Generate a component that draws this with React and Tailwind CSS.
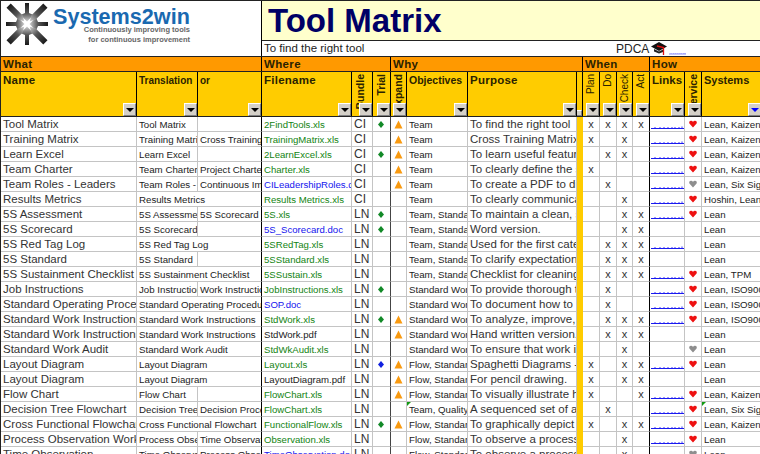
import React from "react";

const COLS = "grid grid-cols-[136px_61px_64px_90px_21px_18px_16px_61px_109px_6px_17px_17px_16px_17px_35px_17px_60px]";

const T = "Team", S = "Team, Standard", W = "Standard Work", F = "Flow, Standard";
const rows = [
  ["Tool Matrix", "Tool Matrix", "", "2FindTools.xls", "g", "CI", "g", 1, T, "To find the right tool", "xxxx", 1, "r", "Lean, Kaizen"],
  ["Training Matrix", "Training Matrix", "Cross Training Matrix", "TrainingMatrix.xls", "g", "CI", "", 1, T, "Cross Training Matrix", "x x ", 1, "r", "Lean, Kaizen"],
  ["Learn Excel", "Learn Excel", "", "2LearnExcel.xls", "g", "CI", "g", 1, T, "To learn useful features", " xx ", 1, "r", "Lean, Kaizen"],
  ["Team Charter", "Team Charter", "Project Charter", "Charter.xls", "g", "CI", "", 1, T, "To clearly define the scope", "x   ", 1, "r", "Lean, Kaizen"],
  ["Team Roles - Leaders", "Team Roles - Leaders", "Continuous Improvement", "CILeadershipRoles.doc", "b", "CI", "", 1, T, "To create a PDF to display", " x  ", 1, "s", "Lean, Six Sigma"],
  ["Results Metrics", "Results Metrics", null, "Results Metrics.xls", "g", "CI", "", 0, T, "To clearly communicate", "  x ", 1, "r", "Hoshin, Lean"],
  ["5S Assessment", "5S Assessment", "5S Scorecard", "5S.xls", "g", "LN", "g", 0, S, "To maintain a clean, safe", "  xx", 1, "r", "Lean"],
  ["5S Scorecard", "5S Scorecard", "", "5S_Scorecard.doc", "b", "LN", "g", 0, S, "Word version.", "  xx", 0, "", "Lean"],
  ["5S Red Tag Log", "5S Red Tag Log", null, "5SRedTag.xls", "g", "LN", "", 0, S, "Used for the first category", " xxx", 1, "", "Lean"],
  ["5S Standard", "5S Standard", "", "5SStandard.xls", "g", "LN", "", 0, S, "To clarify expectations", " xxx", 0, "", "Lean"],
  ["5S Sustainment Checklist", "5S Sustainment Checklist", null, "5SSustain.xls", "g", "LN", "", 0, S, "Checklist for cleaning", " xxx", 1, "r", "Lean, TPM"],
  ["Job Instructions", "Job Instructions", "Work Instructions", "JobInstructions.xls", "g", "LN", "g", 0, W, "To provide thorough training", " x  ", 1, "r", "Lean, ISO9000"],
  ["Standard Operating Procedures", "Standard Operating Procedures", null, "SOP.doc", "b", "LN", "", 0, W, "To document how to", " x  ", 1, "r", "Lean, ISO9000"],
  ["Standard Work Instructions", "Standard Work Instructions", null, "StdWork.xls", "g", "LN", "g", 1, W, "To analyze, improve,", " xxx", 1, "r", "Lean, ISO9000"],
  ["Standard Work Instructions", "Standard Work Instructions", null, "StdWork.pdf", "k", "LN", "", 1, W, "Hand written version.", " xxx", 0, "", "Lean"],
  ["Standard Work Audit", "Standard Work Audit", null, "StdWkAudit.xls", "g", "LN", "", 0, W, "To ensure that work is", "  x ", 0, "s", "Lean"],
  ["Layout Diagram", "Layout Diagram", null, "Layout.xls", "g", "LN", "b", 1, F, "Spaghetti Diagrams - to", "x xx", 1, "r", "Lean"],
  ["Layout Diagram", "Layout Diagram", null, "LayoutDiagram.pdf", "k", "LN", "", 1, F, "For pencil drawing.", "x xx", 0, "", "Lean"],
  ["Flow Chart", "Flow Chart", "", "FlowChart.xls", "g", "LN", "", 1, F, "To visually illustrate how", "x  x", 1, "r", "Lean, Kaizen"],
  ["Decision Tree Flowchart", "Decision Tree", "Decision Process", "FlowChart.xls", "g", "LN", "", 0, "Team, Quality", "A sequenced set of actions", " x  ", 1, "r", "Lean, Six Sigma", 1],
  ["Cross Functional Flowchart", "Cross Functional Flowchart", null, "FunctionalFlow.xls", "g", "LN", "g", 1, F, "To graphically depict", "x xx", 1, "r", "Lean, Kaizen"],
  ["Process Observation Worksheet", "Process Observation", "Time Observation", "Observation.xls", "g", "LN", "", 0, F, "To observe a process", "  x ", 1, "r", "Lean"],
  ["Time Observation", "Time Observation", "Process Observation", "TimeObservation.doc", "b", "LN", "", 0, F, "To observe a process", "  x ", 0, "s", "Lean"],
];

const Filter = ({ blue, small }) => (
  <div className={`absolute right-0 bottom-0 flex items-center justify-center border border-t-white border-l-white border-r-[#808080] border-b-[#808080] bg-[#d4d0c8] ${small ? "w-[6px] h-[6px]" : "w-[13px] h-[13px]"}`}>
    {!small && <div className={`w-0 h-0 border-x-[4px] border-x-transparent border-t-[4px] ${blue ? "border-t-[#0000ff]" : "border-t-black"}`} />}
  </div>
);

const Logo = () => (
  <svg width="46" height="44" viewBox="-23 -22 46 44" className="shrink-0">
    <defs>
      <linearGradient id="lg" x1="0" y1="0" x2="0" y2="1">
        <stop offset="0" stopColor="#1a1a1a" />
        <stop offset="0.55" stopColor="#555" />
        <stop offset="1" stopColor="#d0d0d0" />
      </linearGradient>
    </defs>
    {[0, 90, 180, 270].map((a) => (
      <polygon key={a} transform={`rotate(${a})`} points="-2,-21 2,-21 2,-11 6.5,-9 0,-2.5 -6.5,-9 -2,-11" fill="url(#lg)" />
    ))}
    {[45, 135, 225, 315].map((a) => (
      <polygon key={a} transform={`rotate(${a})`} points="-3,-26 3,-26 3,-9 0,-4 -3,-9" fill="url(#lg)" />
    ))}
  </svg>
);

const Hat = () => (
  <svg width="17" height="14" viewBox="0 0 17 14" className="shrink-0">
    <polygon points="0,4.5 8,0 16,4.5 8,9" fill="#111" />
    <polygon points="3,7 8,9.5 12,7.5 12,10 8,11.5 3,9.5" fill="#222" />
    <path d="M6 4 L12.5 5.5 V13" stroke="#e01010" strokeWidth="1.3" fill="none" />
  </svg>
);

const Link = ({ w = "w-[33px]" }) => (
  <svg viewBox="0 0 33 3" className={`block ${w} h-[3px]`}>
    <path d="M0 2.5 H33" stroke="#1a1af0" strokeWidth="1" />
    <path d="M4 1 V2 M9 1 V2 M13 1 V2 M17 1 V2 M21 1 V2 M24 1 V2 M28 1 V2 M31 0.5 V2" stroke="#3a3af5" strokeWidth="1" />
  </svg>
);

const Heart = ({ c }) => (
  <svg width="8" height="8" viewBox="0 0 8 7">
    <path d="M4 7 L0.4 3 Q-0.4 .6 1.8 .2 Q3.4 0 4 1.6 Q4.6 0 6.2 .2 Q8.4 .6 7.6 3 Z" fill={c === "r" ? "#ee1111" : "#8e8e8e"} />
  </svg>
);

const Tri = () => (
  <svg width="9" height="9" viewBox="0 0 9 9"><polygon points="4.5,0.5 8.5,8.5 0.5,8.5" fill="#f99a10" /></svg>
);

const Mark = ({ c }) => (
  <svg width="6" height="7" viewBox="0 0 6 7"><path d="M3 0 L6 3.5 L3 7 L0 3.5 Z" fill={c === "g" ? "#128a28" : "#1020e0"} /></svg>
);

const Corner = () => <div className="absolute left-0 top-0 w-0 h-0 border-t-[4px] border-r-[4px] border-t-[#129a12] border-r-transparent" />;

const fileColor = { g: "text-[#128412]", b: "text-[#1414ee]", k: "text-[#222]" };

const HBase = "relative border-r border-black bg-[#ffcc00] overflow-hidden";
const Head = ({ label, size = "text-[11.5px] tracking-[0.25px]", blue }) => (
  <div className={`${HBase} pl-[2px] pt-[1px] font-bold leading-[15px] whitespace-nowrap text-[#2a2200] ${size}`}>
    {label}<Filter blue={blue} />
  </div>
);
const VHead = ({ label, bold, shift = "justify-center" }) => (
  <div className={HBase}>
    <div className={`absolute left-0 right-0 top-[2px] flex ${shift}`}>
      <span className={`[writing-mode:vertical-rl] rotate-180 whitespace-nowrap leading-none text-[#2a2200] ${bold ? "font-bold text-[10.5px]" : "text-[10px]"}`}>{label}</span>
    </div>
    <Filter />
  </div>
);

const Sec = ({ label, span }) => (
  <div className={`${span} border-r border-black pl-[2px] font-bold text-[11.5px] leading-[14px] tracking-[0.35px] text-[#2a2200]`}>{label}</div>
);

const Cell = ({ children, className = "" }) => (
  <div className={`relative overflow-hidden whitespace-nowrap border-r border-b border-[#c4c4c4] h-[15px] leading-[14px] ${className}`}>{children}</div>
);

const Row = ({ r }) => {
  const [name, tr, or, file, fc, bundle, trial, expand, obj, purpose, pdca, link, heart, sys, comment] = r;
  const small = "text-[9.7px] pl-[2px] pt-[1px] text-[#222]";
  const big = "text-[11.5px] pl-[2px] text-[#333]";
  return (
    <div className={COLS}>
      <Cell className={big}>{name}</Cell>
      <Cell className={`${small} ${or === null ? "col-span-2 border-r-black" : ""}`}>{tr}</Cell>
      {or !== null && <Cell className={`${small} border-r-black`}>{or}</Cell>}
      <Cell className={`text-[9.6px] pl-[2px] pt-[1px] ${fileColor[fc]}`}>{file}</Cell>
      <Cell className="text-[12px] pl-[2px] text-[#333]">{bundle}</Cell>
      <Cell className="border-r-[#444] flex items-center justify-center pr-[2px]">{trial && <Mark c={trial} />}</Cell>
      <Cell className="flex items-center justify-center">{expand ? <Tri /> : null}</Cell>
      <Cell className={small}>{comment && <Corner />}{obj}</Cell>
      <Cell className={big}>{purpose}</Cell>
      <div className="bg-[#ffcc00] h-[15px]" />
      {pdca.split("").map((c, i) => (
        <Cell key={i} className={`text-[11px] text-center text-[#333] ${i === 3 ? "border-r-black" : ""}`}>{c === "x" ? "x" : ""}</Cell>
      ))}
      <Cell className="flex items-end pb-[2px] pl-[1px]">{link ? <Link /> : null}</Cell>
      <Cell className="flex items-center justify-center">{heart && <Heart c={heart} />}</Cell>
      <Cell className={small}>{comment && <Corner />}{sys}</Cell>
    </div>
  );
};

export default function App() {
  return (
    <div className="w-[760px] h-[454px] overflow-hidden bg-white border-l border-t border-[#222] font-['Liberation_Sans',Arial,sans-serif]">
      <div className="flex h-[56px] border-b border-[#222]">
        <div className="w-[261px] shrink-0 border-r border-black flex items-start pl-[3px] pt-[1px]">
          <Logo />
          <div className="ml-[3px] w-[138px] flex flex-col items-end">
            <div className="text-[21.6px] leading-[20px] mt-[5px] font-bold text-[#1a69b0] whitespace-nowrap w-full">Systems2win</div>
            <div className="text-[7.5px] leading-[9.5px] mt-[-2px] pr-[1px] font-bold text-[#666] whitespace-nowrap">Continuously improving tools</div>
            <div className="text-[7.5px] leading-[9.5px] pr-[1px] font-bold text-[#666] whitespace-nowrap">for continuous improvement</div>
          </div>
        </div>
        <div className="flex-1 flex flex-col">
          <div className="h-[40px] bg-[#ffffcc] border-b border-[#222] pl-[6px] text-[#000066] font-bold text-[33px] leading-[40px] whitespace-nowrap">Tool Matrix</div>
          <div className="h-[15px] flex items-center pl-[2px] text-[11.5px] text-[#222] relative">
            <span className="w-[352px] shrink-0">To find the right tool</span>
            <span className="text-[12px]">PDCA</span>
            <span className="ml-[2px]"><Hat /></span>
            <span className="self-end mb-[1px] ml-[1px]"><Link w="w-[17px]" /></span>
          </div>
        </div>
      </div>
      <div className={`${COLS} h-[15px] bg-[#ff9900] border-b border-[#222]`}>
        <Sec label="What" span="col-span-3" />
        <Sec label="Where" span="col-span-3" />
        <Sec label="Why" span="col-span-4" />
        <Sec label="When" span="col-span-4" />
        <Sec label="How" span="col-span-3" />
      </div>
      <div className={`${COLS} h-[45px] border-b border-[#222]`}>
        <Head label="Name" />
        <Head label="Translation" size="text-[10px]" />
        <Head label="or" size="text-[10px]" />
        <Head label="Filename" />
        <VHead label="Bundle" bold shift="justify-start pl-[3px]" />
        <VHead label="Trial" bold />
        <VHead label="Expand" bold />
        <Head label="Objectives" size="text-[10.5px]" />
        <Head label="Purpose" />
        <div className={HBase}><Filter small /></div>
        <VHead label="Plan" />
        <VHead label="Do" />
        <VHead label="Check" />
        <VHead label="Act" />
        <Head label="Links" size="text-[11.5px]" />
        <VHead label="Service" bold />
        <Head label="Systems" size="text-[11px]" blue />
      </div>
      {rows.map((r, i) => <Row key={i} r={r} />)}
    </div>
  );
}
